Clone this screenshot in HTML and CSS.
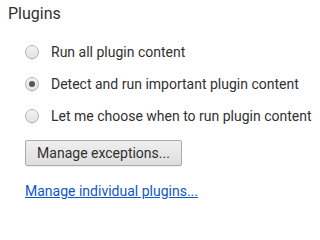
FILE: index.html
```html
<!DOCTYPE html>
<html>
<head>
<meta charset="utf-8">
<link rel="stylesheet" href="styles.css">
</head>
<body>
<section class="panel">
  <h3 class="title">Plugins</h3>
  <div class="options">
    <label class="option"><span class="radio"></span><span class="label">Run all plugin content</span></label>
    <label class="option"><span class="radio checked"></span><span class="label">Detect and run important plugin content</span></label>
    <label class="option"><span class="radio"></span><span class="label">Let me choose when to run plugin content</span></label>
  </div>
  <div class="actions">
    <button class="btn">Manage exceptions...</button>
  </div>
  <a class="link" href="#">Manage individual plugins...</a>
</section>
</body>
</html>
```
FILE: styles.css
```css
html, body {
  margin: 0;
  padding: 0;
  background: #ffffff;
}
.panel {
  font-family: Roboto, "Noto Sans", sans-serif;
  color: #303030;
  padding: 4px 0 0 8px;
  width: 312px;
  display: flex;
  flex-direction: column;
  align-items: flex-start;
}
.title {
  margin: 0;
  font-size: 16px;
  font-weight: 400;
  line-height: 20px;
  color: #303030;
}
.options {
  display: flex;
  flex-direction: column;
  margin-top: 12px;
  padding-left: 17px;
}
.option {
  display: flex;
  align-items: center;
  gap: 12px;
  height: 32px;
  font-size: 14px;
  white-space: nowrap;
}
.radio {
  box-sizing: border-box;
  width: 14px;
  height: 14px;
  border-radius: 50%;
  border: 1px solid #b4b4b4;
  background: linear-gradient(#f4f4f4, #e4e4e4);
  box-shadow: 0 1px 1px rgba(0,0,0,0.08);
  display: flex;
  align-items: center;
  justify-content: center;
  flex: none;
}
.radio.checked::after {
  content: "";
  width: 6px;
  height: 6px;
  border-radius: 50%;
  background: #555555;
}
.actions {
  display: flex;
  padding-left: 17px;
  margin-top: 8px;
}
.btn {
  font-family: Roboto, "Noto Sans", sans-serif;
  font-size: 14px;
  color: #303030;
  height: 26px;
  width: 157px;
  border: 1px solid #aaaaaa;
  border-radius: 2px;
  background: linear-gradient(#efefef, #dedede);
  box-shadow: 0 1px 0 rgba(0,0,0,0.06);
  padding: 0;
}
.link {
  display: block;
  margin-top: 17px;
  margin-left: 17px;
  font-size: 14px;
  line-height: 17px;
  color: #1155cc;
  text-decoration: underline;
}
```
